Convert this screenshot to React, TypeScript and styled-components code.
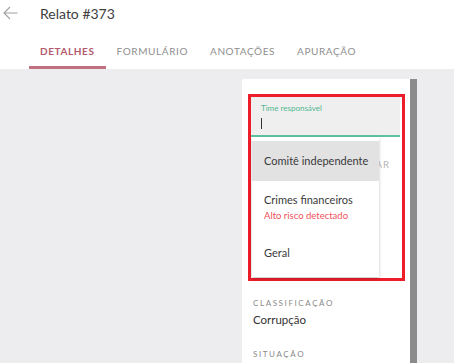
import React from "react";
import styled, { createGlobalStyle } from "styled-components";

const Global = createGlobalStyle`
  html, body { margin: 0; padding: 0; }
  body {
    width: 454px; height: 363px; overflow: hidden;
    background: #ededf0;
    font-family: Lato, "Noto Sans", sans-serif;
  }
`;

const Page = styled.div`
  display: flex;
  flex-direction: column;
  height: 363px;
`;

const Header = styled.header`
  background: #ffffff;
  display: flex;
  flex-direction: column;
`;

const TitleRow = styled.div`
  display: flex;
  align-items: center;
  height: 26px;
  padding-left: 3px;
`;

const BackButton = styled.button`
  border: 0;
  background: none;
  padding: 0;
  width: 15px;
  height: 14px;
  display: flex;
  color: #a0a0a0;
  margin-right: 22px;
`;

const Title = styled.h1`
  margin: 0;
  font-size: 14px;
  font-weight: 400;
  color: #3e3e3e;
`;

const Tabs = styled.nav`
  display: flex;
  padding-left: 29px;
  margin-top: 12px;
`;

const Tab = styled.div<{ $active?: boolean }>`
  padding: 0 11px 3px;
  height: 31px;
  display: flex;
  align-items: center;
  box-sizing: border-box;
  font-size: 10px;
  font-weight: ${(p) => (p.$active ? 700 : 400)};
  letter-spacing: 0.6px;
  color: ${(p) => (p.$active ? "#b35a6c" : "#8f8f8f")};
  border-bottom: 3px solid ${(p) => (p.$active ? "#c07080" : "transparent")};
`;

const Body = styled.main`
  flex: 1;
  display: flex;
  padding-top: 10px;
  padding-left: 242px;
  min-height: 0;
`;

const Card = styled.section`
  width: 168px;
  background: #ffffff;
  padding: 15px 5px 0 6px;
  box-sizing: border-box;
  border-radius: 2px 0 0 0;
`;

const Scrollbar = styled.div`
  width: 7px;
  background: #8c8c8c;
`;

const Highlight = styled.div`
  position: relative;
  border: 3px solid #ee1d2a;
  height: 187px;
  box-sizing: border-box;
  display: flex;
  flex-direction: column;
`;

const Field = styled.div`
  background: #efefef;
  border-bottom: 2px solid #5fc29f;
  height: 40px;
  margin-right: 2px;
  box-sizing: border-box;
  padding: 6px 10px 0 10px;
  display: flex;
  flex-direction: column;
`;

const FieldLabel = styled.label`
  font-size: 8px;
  color: #4fb88f;
  line-height: 11px;
`;

const Caret = styled.span`
  width: 1px;
  height: 11px;
  background: #333;
  margin-top: 4px;
`;

const ActionRow = styled.div`
  display: flex;
  justify-content: flex-end;
  padding: 22px 12px 0 0;
`;

const ActionText = styled.span`
  font-size: 9.5px;
  letter-spacing: 1px;
  color: #b5b5b5;
`;

const Menu = styled.ul`
  position: absolute;
  top: 40px;
  left: 1px;
  width: 127px;
  margin: 0;
  padding: 4px 0;
  list-style: none;
  background: #ffffff;
  box-shadow: 0 2px 4px rgba(0, 0, 0, 0.16), 0 1px 2px rgba(0, 0, 0, 0.08);
`;

const MenuItem = styled.li<{ $selected?: boolean; $tall?: boolean }>`
  height: ${(p) => (p.$tall ? 52 : 40)}px;
  padding-left: 12px;
  display: flex;
  flex-direction: column;
  justify-content: center;
  background: ${(p) => (p.$selected ? "#e2e2e2" : "transparent")};
  white-space: nowrap;
`;

const ItemText = styled.span`
  font-size: 11px;
  color: #3a3a3a;
  line-height: 16px;
`;

const ItemNote = styled.span`
  font-size: 9.5px;
  color: #f0515d;
  line-height: 14px;
  margin-top: 1px;
`;

const Section = styled.div`
  padding-left: 5px;
  margin-top: 16px;
  display: flex;
  flex-direction: column;
`;

const SectionLabel = styled.span`
  font-size: 8px;
  letter-spacing: 1.6px;
  color: #8a8a8a;
  line-height: 12px;
`;

const SectionValue = styled.span`
  font-size: 11.5px;
  color: #333;
  line-height: 18px;
  margin-top: 2px;
  margin-bottom: 19px;
`;

export default function App() {
  return (
    <>
      <Global />
      <Page>
        <Header>
          <TitleRow>
            <BackButton aria-label="voltar">
              <svg width="15" height="14" viewBox="0 0 15 14" fill="none" stroke="currentColor" strokeWidth="1.1">
                <path d="M14.5 7H1M7 1L1 7l6 6" />
              </svg>
            </BackButton>
            <Title>Relato #373</Title>
          </TitleRow>
          <Tabs>
            <Tab $active>DETALHES</Tab>
            <Tab>FORMULÁRIO</Tab>
            <Tab>ANOTAÇÕES</Tab>
            <Tab>APURAÇÃO</Tab>
          </Tabs>
        </Header>
        <Body>
          <Card>
            <Highlight>
              <Field>
                <FieldLabel>Time responsável</FieldLabel>
                <Caret />
              </Field>
              <ActionRow>
                <ActionText>SALVAR</ActionText>
              </ActionRow>
              <Menu>
                <MenuItem $selected>
                  <ItemText>Comitê independente</ItemText>
                </MenuItem>
                <MenuItem $tall>
                  <ItemText>Crimes financeiros</ItemText>
                  <ItemNote>Alto risco detectado</ItemNote>
                </MenuItem>
                <MenuItem>
                  <ItemText>Geral</ItemText>
                </MenuItem>
              </Menu>
            </Highlight>
            <Section>
              <SectionLabel>CLASSIFICAÇÃO</SectionLabel>
              <SectionValue>Corrupção</SectionValue>
              <SectionLabel>SITUAÇÃO</SectionLabel>
            </Section>
          </Card>
          <Scrollbar />
        </Body>
      </Page>
    </>
  );
}
